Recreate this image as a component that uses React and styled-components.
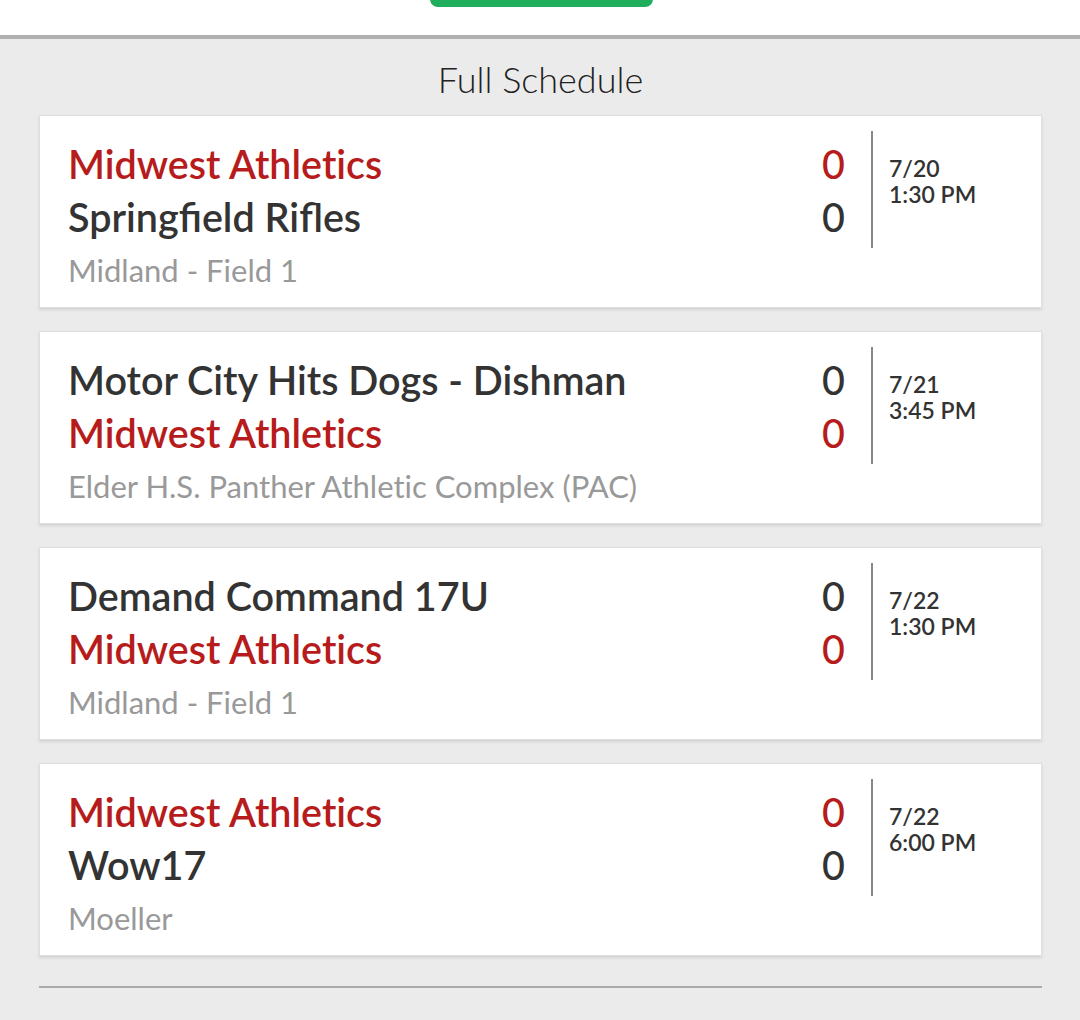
import styled, { createGlobalStyle } from "styled-components";

const games = [
  {
    home: { name: "Midwest Athletics", score: 0, ours: true },
    away: { name: "Springfield Rifles", score: 0 },
    venue: "Midland - Field 1",
    date: "7/20",
    time: "1:30 PM",
  },
  {
    home: { name: "Motor City Hits Dogs - Dishman", score: 0 },
    away: { name: "Midwest Athletics", score: 0, ours: true },
    venue: "Elder H.S. Panther Athletic Complex (PAC)",
    date: "7/21",
    time: "3:45 PM",
  },
  {
    home: { name: "Demand Command 17U", score: 0 },
    away: { name: "Midwest Athletics", score: 0, ours: true },
    venue: "Midland - Field 1",
    date: "7/22",
    time: "1:30 PM",
  },
  {
    home: { name: "Midwest Athletics", score: 0, ours: true },
    away: { name: "Wow17", score: 0 },
    venue: "Moeller",
    date: "7/22",
    time: "6:00 PM",
  },
];

// Lato joins "ti" by default; keep the letters apart
const noTi = (text) => text.replace(/ti/g, "t\u200Ci");

export default function App() {
  return (
    <>
      <GlobalStyle />
      <TopBar>
        <ActionButton aria-label="action" />
      </TopBar>
      <Schedule>
        <Title>Full Schedule</Title>
        <GameList>
          {games.map((game, index) => (
            <GameCard key={game.date + index}>
              <Teams>
                {[game.home, game.away].map((team, i) => (
                  <TeamLine key={i} $ours={team.ours}>
                    <span>{noTi(team.name)}</span>
                    <Score>{team.score}</Score>
                  </TeamLine>
                ))}
                <Venue>{noTi(game.venue)}</Venue>
              </Teams>
              <When>
                <div>{game.date}</div>
                <div>{game.time}</div>
              </When>
            </GameCard>
          ))}
        </GameList>
        <BottomRule />
      </Schedule>
    </>
  );
}

const GlobalStyle = createGlobalStyle`
  body {
    margin: 0;
    background: #ebebeb;
    font-family: Lato, "Open Sans", sans-serif;
  }
`;

const TopBar = styled.div`
  height: 35px;
  background: #fff;
  border-bottom: 4px solid #b0b0b0;
  display: flex;
  justify-content: center;
  overflow: hidden;
`;

const ActionButton = styled.button`
  width: 223px;
  height: 48px;
  margin: -41px 0 0 2px;
  border: none;
  border-radius: 8px;
  background: #1fae5b;
`;

const Schedule = styled.div`
  background: #ebebeb;
  padding: 0 38px 34px 39px;
`;

const Title = styled.h1`
  margin: 19px 0 14px;
  text-align: center;
  font-size: 36px;
  font-weight: 300;
  line-height: 1.2;
  color: #222;
`;

const GameList = styled.div`
  display: flex;
  flex-direction: column;
  gap: 23px;
`;

const GameCard = styled.div`
  display: flex;
  align-items: flex-start;
  height: 193px;
  box-sizing: border-box;
  padding: 21px 0 0 28px;
  background: #fff;
  border: 1px solid #dedede;
  box-shadow: 0 2px 3px rgba(0, 0, 0, 0.1);
`;

const Teams = styled.div`
  flex: 1;
`;

const TeamLine = styled.div`
  display: flex;
  justify-content: space-between;
  font-size: 39.5px;
  font-weight: 600;
  line-height: 53px;
  color: ${(p) => (p.$ours ? "#b71c1c" : "#333")};
`;

const Score = styled.span`
  font-weight: 500;
`;

const Venue = styled.div`
  font-size: 31px;
  line-height: 54px;
  color: #999;
`;

const When = styled.div`
  box-sizing: border-box;
  width: 170px;
  height: 117px;
  margin: -6px 0 0 26px;
  padding: 24px 0 0 16px;
  border-left: 2px solid #888;
  font-size: 23px;
  font-weight: 600;
  line-height: 26px;
  color: #333;
`;

const BottomRule = styled.hr`
  margin: 30px 0 0;
  border: none;
  height: 2px;
  background: #aaa;
`;
